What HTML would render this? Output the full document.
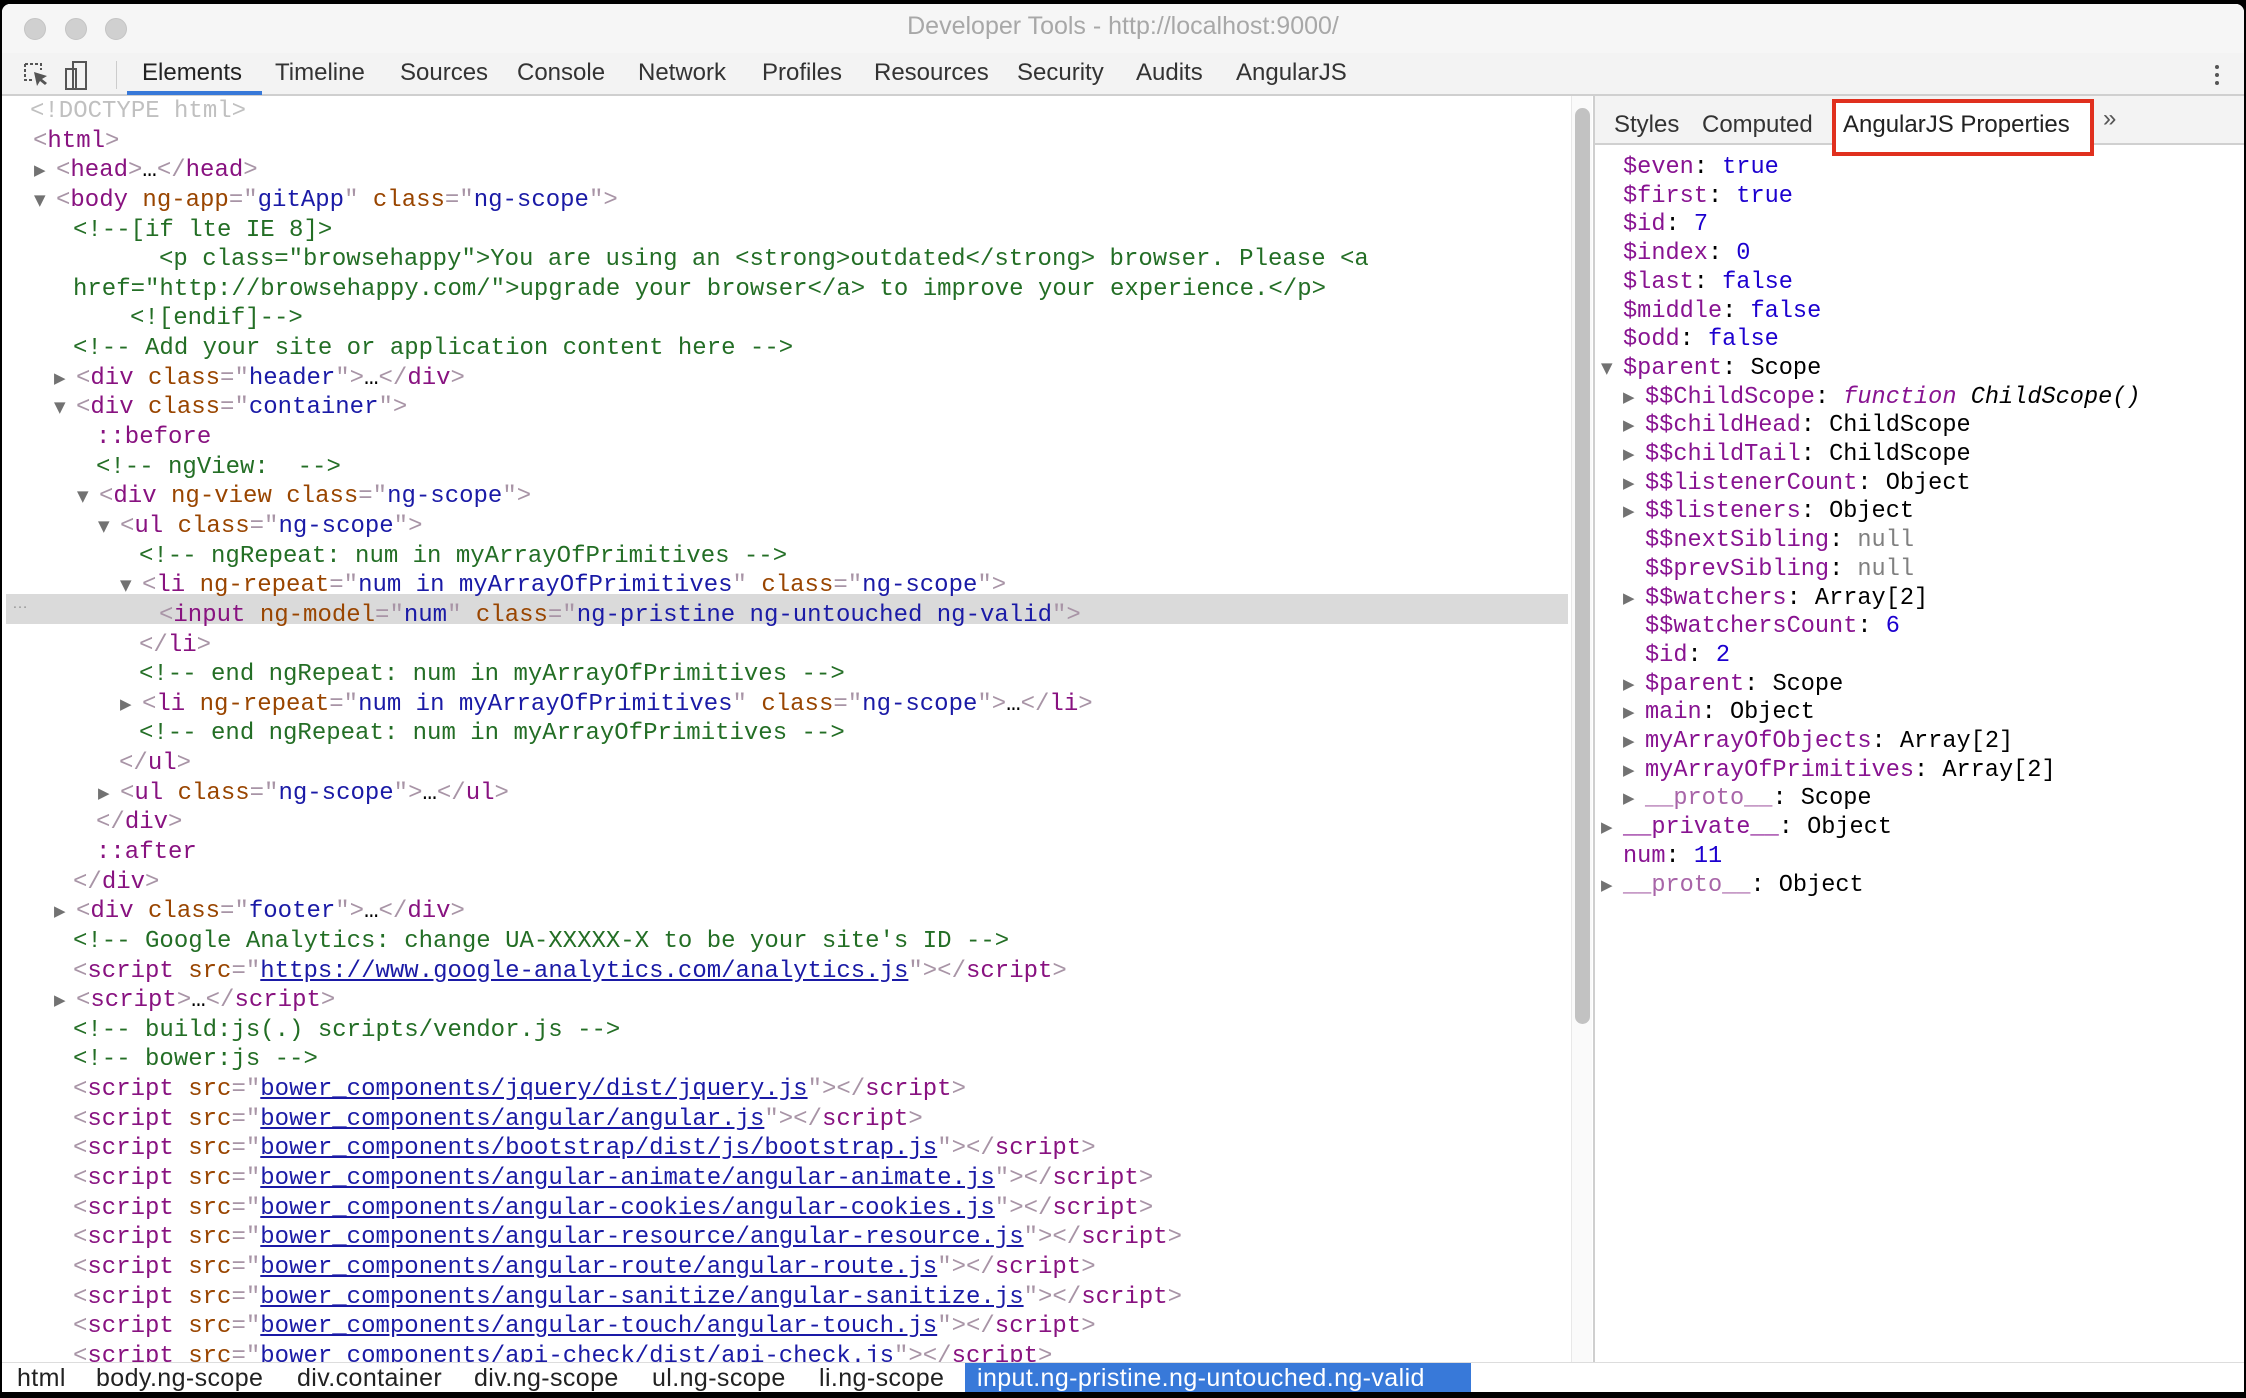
<!DOCTYPE html>
<html><head><meta charset="utf-8">
<style>
*{margin:0;padding:0;box-sizing:border-box}
body{width:2246px;height:1398px;background:#000;overflow:hidden;position:relative;font-family:"Liberation Sans",sans-serif}
#win{position:absolute;left:2px;top:4px;width:2242px;height:1388px;background:#fff;border-radius:8px 8px 0 0;overflow:hidden}
#title{position:absolute;left:0;top:0;width:100%;height:49px;background:#f6f6f6}
.tl{position:absolute;top:14px;width:22px;height:22px;border-radius:50%;background:#d0d0d0;border:1px solid #c4c4c4}
#ttext{position:absolute;top:8px;left:0;width:100%;text-align:center;font-size:25px;color:#a8a8a8}
#tabs{position:absolute;left:0;top:49px;width:100%;height:43px;background:#f3f3f3;border-bottom:2px solid #cfcfcf}
.tab{position:absolute;top:6px;font-size:24px;color:#333}
#code,#props{position:absolute;font-family:"Liberation Mono",monospace;font-size:24px;white-space:pre}
.l{position:absolute;height:29.64px;line-height:29.64px}
.l .tri{position:absolute;left:-22px;top:0;line-height:29.64px}
.t{color:#881280}.b{color:#a894a6}.a{color:#994500}.v{color:#1a1aa6}.c{color:#236e25}.g{color:#c0c0c0}
.u{color:#1a1aa6;text-decoration:underline}
.tri{font-size:15px;color:#727272;font-family:"DejaVu Sans",sans-serif}
.k{color:#881391}.n{color:#1c00cf}.nl{color:#808080}.pk{color:#a865a8}
#crumbs{position:absolute;left:0;top:1358px;width:100%;height:32px;background:#fff;border-top:1px solid #ddd;font-size:25px;color:#222;letter-spacing:0.4px}
.cr{position:absolute;top:1px}
</style></head><body>
<div id="win">
<div id="title">
<div class="tl" style="left:22px"></div><div class="tl" style="left:63px"></div><div class="tl" style="left:103px"></div>
<div id="ttext">Developer Tools - http://localhost:9000/</div>
</div>
<div id="tabs">
<svg style="position:absolute;left:20px;top:8px" width="28" height="28" viewBox="0 0 28 28"><path d="M3 3h16v6M3 3v16h7" fill="none" stroke="#555" stroke-width="2" stroke-dasharray="3 2"/><path d="M12 11l3 14 3-5 5 4 2-2-5-4 5-3z" fill="#555"/></svg>
<svg style="position:absolute;left:62px;top:6px" width="26" height="34" viewBox="0 0 26 34"><rect x="2" y="10" width="10" height="20" fill="none" stroke="#555" stroke-width="2"/><rect x="9" y="3" width="13" height="27" fill="none" stroke="#555" stroke-width="2"/></svg>
<div style="position:absolute;left:114px;top:8px;width:1px;height:28px;background:#ccc"></div>
<div class="tab" style="left:140px;color:#222">Elements</div>
<div style="position:absolute;left:125px;top:38px;width:135px;height:4px;background:#3879d9"></div>
<div class="tab" style="left:273px">Timeline</div>
<div class="tab" style="left:398px">Sources</div>
<div class="tab" style="left:515px">Console</div>
<div class="tab" style="left:636px">Network</div>
<div class="tab" style="left:760px">Profiles</div>
<div class="tab" style="left:872px">Resources</div>
<div class="tab" style="left:1015px">Security</div>
<div class="tab" style="left:1134px">Audits</div>
<div class="tab" style="left:1234px">AngularJS</div>
<div style="position:absolute;left:2213px;top:12px;width:4px;height:4px;background:#555;border-radius:50%;box-shadow:0 8px 0 #555,0 16px 0 #555"></div>
</div>

<div style="position:absolute;left:4px;top:590px;width:1562px;height:30px;background:#dadada"></div>
<div style="position:absolute;left:10px;top:591px;font-size:16px;color:#999">…</div>

<div id="code" style="left:-2px;top:93px">
<div class="l" style="top:0;left:30px"><span class="g">&lt;!DOCTYPE html&gt;</span></div>
<div class="l" style="top:29.64px;left:33px"><span class="b">&lt;</span><span class="t">html</span><span class="b">&gt;</span></div>
<div class="l" style="top:59.28px;left:56px"><span class="tri">▶</span><span class="b">&lt;</span><span class="t">head</span><span class="b">&gt;</span>…<span class="b">&lt;/</span><span class="t">head</span><span class="b">&gt;</span></div>
<div class="l" style="top:88.92px;left:56px"><span class="tri">▼</span><span class="b">&lt;</span><span class="t">body</span> <span class="a">ng-app</span><span class="b">="</span><span class="v">gitApp</span><span class="b">"</span> <span class="a">class</span><span class="b">="</span><span class="v">ng-scope</span><span class="b">"&gt;</span></div>
<div class="l c" style="top:118.56px;left:73px">&lt;!--[if lte IE 8]&gt;</div>
<div class="l c" style="top:148.2px;left:159px">&lt;p class="browsehappy"&gt;You are using an &lt;strong&gt;outdated&lt;/strong&gt; browser. Please &lt;a</div>
<div class="l c" style="top:177.84px;left:73px">href="http://browsehappy.com/"&gt;upgrade your browser&lt;/a&gt; to improve your experience.&lt;/p&gt;</div>
<div class="l c" style="top:207.48px;left:130px">&lt;![endif]--&gt;</div>
<div class="l c" style="top:237.12px;left:73px">&lt;!-- Add your site or application content here --&gt;</div>
<div class="l" style="top:266.76px;left:76px"><span class="tri">▶</span><span class="b">&lt;</span><span class="t">div</span> <span class="a">class</span><span class="b">="</span><span class="v">header</span><span class="b">"&gt;</span>…<span class="b">&lt;/</span><span class="t">div</span><span class="b">&gt;</span></div>
<div class="l" style="top:296.4px;left:76px"><span class="tri">▼</span><span class="b">&lt;</span><span class="t">div</span> <span class="a">class</span><span class="b">="</span><span class="v">container</span><span class="b">"&gt;</span></div>
<div class="l t" style="top:326.04px;left:96px">::before</div>
<div class="l c" style="top:355.68px;left:96px">&lt;!-- ngView:  --&gt;</div>
<div class="l" style="top:385.32px;left:99px"><span class="tri">▼</span><span class="b">&lt;</span><span class="t">div</span> <span class="a">ng-view</span> <span class="a">class</span><span class="b">="</span><span class="v">ng-scope</span><span class="b">"&gt;</span></div>
<div class="l" style="top:414.96px;left:120px"><span class="tri">▼</span><span class="b">&lt;</span><span class="t">ul</span> <span class="a">class</span><span class="b">="</span><span class="v">ng-scope</span><span class="b">"&gt;</span></div>
<div class="l c" style="top:444.6px;left:139px">&lt;!-- ngRepeat: num in myArrayOfPrimitives --&gt;</div>
<div class="l" style="top:474.24px;left:142px"><span class="tri">▼</span><span class="b">&lt;</span><span class="t">li</span> <span class="a">ng-repeat</span><span class="b">="</span><span class="v">num in myArrayOfPrimitives</span><span class="b">"</span> <span class="a">class</span><span class="b">="</span><span class="v">ng-scope</span><span class="b">"&gt;</span></div>
<div class="l" style="top:503.88px;left:159px"><span class="b">&lt;</span><span class="t">input</span> <span class="a">ng-model</span><span class="b">="</span><span class="v">num</span><span class="b">"</span> <span class="a">class</span><span class="b">="</span><span class="v">ng-pristine ng-untouched ng-valid</span><span class="b">"&gt;</span></div>
<div class="l" style="top:533.52px;left:139px"><span class="b">&lt;/</span><span class="t">li</span><span class="b">&gt;</span></div>
<div class="l c" style="top:563.16px;left:139px">&lt;!-- end ngRepeat: num in myArrayOfPrimitives --&gt;</div>
<div class="l" style="top:592.8px;left:142px"><span class="tri">▶</span><span class="b">&lt;</span><span class="t">li</span> <span class="a">ng-repeat</span><span class="b">="</span><span class="v">num in myArrayOfPrimitives</span><span class="b">"</span> <span class="a">class</span><span class="b">="</span><span class="v">ng-scope</span><span class="b">"&gt;</span>…<span class="b">&lt;/</span><span class="t">li</span><span class="b">&gt;</span></div>
<div class="l c" style="top:622.44px;left:139px">&lt;!-- end ngRepeat: num in myArrayOfPrimitives --&gt;</div>
<div class="l" style="top:652.08px;left:119px"><span class="b">&lt;/</span><span class="t">ul</span><span class="b">&gt;</span></div>
<div class="l" style="top:681.72px;left:120px"><span class="tri">▶</span><span class="b">&lt;</span><span class="t">ul</span> <span class="a">class</span><span class="b">="</span><span class="v">ng-scope</span><span class="b">"&gt;</span>…<span class="b">&lt;/</span><span class="t">ul</span><span class="b">&gt;</span></div>
<div class="l" style="top:711.36px;left:96px"><span class="b">&lt;/</span><span class="t">div</span><span class="b">&gt;</span></div>
<div class="l t" style="top:741px;left:96px">::after</div>
<div class="l" style="top:770.64px;left:73px"><span class="b">&lt;/</span><span class="t">div</span><span class="b">&gt;</span></div>
<div class="l" style="top:800.28px;left:76px"><span class="tri">▶</span><span class="b">&lt;</span><span class="t">div</span> <span class="a">class</span><span class="b">="</span><span class="v">footer</span><span class="b">"&gt;</span>…<span class="b">&lt;/</span><span class="t">div</span><span class="b">&gt;</span></div>
<div class="l c" style="top:829.92px;left:73px">&lt;!-- Google Analytics: change UA-XXXXX-X to be your site's ID --&gt;</div>
<div class="l" style="top:859.56px;left:73px"><span class="b">&lt;</span><span class="t">script</span> <span class="a">src</span><span class="b">="</span><span class="u">https://www.google-analytics.com/analytics.js</span><span class="b">"&gt;&lt;/</span><span class="t">script</span><span class="b">&gt;</span></div>
<div class="l" style="top:889.2px;left:76px"><span class="tri">▶</span><span class="b">&lt;</span><span class="t">script</span><span class="b">&gt;</span>…<span class="b">&lt;/</span><span class="t">script</span><span class="b">&gt;</span></div>
<div class="l c" style="top:918.84px;left:73px">&lt;!-- build:js(.) scripts/vendor.js --&gt;</div>
<div class="l c" style="top:948.48px;left:73px">&lt;!-- bower:js --&gt;</div>
<div class="l" style="top:978.12px;left:73px"><span class="b">&lt;</span><span class="t">script</span> <span class="a">src</span><span class="b">="</span><span class="u">bower_components/jquery/dist/jquery.js</span><span class="b">"&gt;&lt;/</span><span class="t">script</span><span class="b">&gt;</span></div>
<div class="l" style="top:1007.76px;left:73px"><span class="b">&lt;</span><span class="t">script</span> <span class="a">src</span><span class="b">="</span><span class="u">bower_components/angular/angular.js</span><span class="b">"&gt;&lt;/</span><span class="t">script</span><span class="b">&gt;</span></div>
<div class="l" style="top:1037.4px;left:73px"><span class="b">&lt;</span><span class="t">script</span> <span class="a">src</span><span class="b">="</span><span class="u">bower_components/bootstrap/dist/js/bootstrap.js</span><span class="b">"&gt;&lt;/</span><span class="t">script</span><span class="b">&gt;</span></div>
<div class="l" style="top:1067.04px;left:73px"><span class="b">&lt;</span><span class="t">script</span> <span class="a">src</span><span class="b">="</span><span class="u">bower_components/angular-animate/angular-animate.js</span><span class="b">"&gt;&lt;/</span><span class="t">script</span><span class="b">&gt;</span></div>
<div class="l" style="top:1096.68px;left:73px"><span class="b">&lt;</span><span class="t">script</span> <span class="a">src</span><span class="b">="</span><span class="u">bower_components/angular-cookies/angular-cookies.js</span><span class="b">"&gt;&lt;/</span><span class="t">script</span><span class="b">&gt;</span></div>
<div class="l" style="top:1126.32px;left:73px"><span class="b">&lt;</span><span class="t">script</span> <span class="a">src</span><span class="b">="</span><span class="u">bower_components/angular-resource/angular-resource.js</span><span class="b">"&gt;&lt;/</span><span class="t">script</span><span class="b">&gt;</span></div>
<div class="l" style="top:1155.96px;left:73px"><span class="b">&lt;</span><span class="t">script</span> <span class="a">src</span><span class="b">="</span><span class="u">bower_components/angular-route/angular-route.js</span><span class="b">"&gt;&lt;/</span><span class="t">script</span><span class="b">&gt;</span></div>
<div class="l" style="top:1185.6px;left:73px"><span class="b">&lt;</span><span class="t">script</span> <span class="a">src</span><span class="b">="</span><span class="u">bower_components/angular-sanitize/angular-sanitize.js</span><span class="b">"&gt;&lt;/</span><span class="t">script</span><span class="b">&gt;</span></div>
<div class="l" style="top:1215.24px;left:73px"><span class="b">&lt;</span><span class="t">script</span> <span class="a">src</span><span class="b">="</span><span class="u">bower_components/angular-touch/angular-touch.js</span><span class="b">"&gt;&lt;/</span><span class="t">script</span><span class="b">&gt;</span></div>
<div class="l" style="top:1244.88px;left:73px"><span class="b">&lt;</span><span class="t">script</span> <span class="a">src</span><span class="b">="</span><span class="u">bower_components/api-check/dist/api-check.js</span><span class="b">"&gt;&lt;/</span><span class="t">script</span><span class="b">&gt;</span></div>
</div>

<div style="position:absolute;left:1569px;top:92px;width:21px;height:1266px;background:#fafafa;border-left:1px solid #e8e8e8"></div>
<div style="position:absolute;left:1573px;top:104px;width:15px;height:916px;background:#c2c2c2;border-radius:8px"></div>
<div style="position:absolute;left:1591px;top:92px;width:2px;height:1266px;background:#cfcfcf"></div>

<div style="position:absolute;left:1593px;top:92px;width:649px;height:49px;background:#f3f3f3;border-bottom:2px solid #d0d0d0"></div>
<div class="tab" style="left:1612px;top:107px;color:#333">Styles</div>
<div class="tab" style="left:1700px;top:107px;color:#333">Computed</div>
<div style="position:absolute;left:1830px;top:95px;width:262px;height:57px;border:4px solid #e0301e;background:#fff"></div>
<div class="tab" style="left:1841px;top:107px;color:#222">AngularJS Properties</div>
<div class="tab" style="left:2101px;top:101px;color:#555">»</div>

<div id="props" style="left:0;top:0;font-size:23.6px">
<div class="l" style="top:149px;left:1621px"><span class="k">$even</span>: <span class="n">true</span></div>
<div class="l" style="top:177.7px;left:1621px"><span class="k">$first</span>: <span class="n">true</span></div>
<div class="l" style="top:206.4px;left:1621px"><span class="k">$id</span>: <span class="n">7</span></div>
<div class="l" style="top:235.1px;left:1621px"><span class="k">$index</span>: <span class="n">0</span></div>
<div class="l" style="top:263.8px;left:1621px"><span class="k">$last</span>: <span class="n">false</span></div>
<div class="l" style="top:292.5px;left:1621px"><span class="k">$middle</span>: <span class="n">false</span></div>
<div class="l" style="top:321.2px;left:1621px"><span class="k">$odd</span>: <span class="n">false</span></div>
<div class="l" style="top:349.9px;left:1621px"><span class="tri">▼</span><span class="k">$parent</span>: Scope</div>
<div class="l" style="top:378.6px;left:1643px"><span class="tri">▶</span><span class="k">$$ChildScope</span>: <i class="k">function</i> <i>ChildScope()</i></div>
<div class="l" style="top:407.3px;left:1643px"><span class="tri">▶</span><span class="k">$$childHead</span>: ChildScope</div>
<div class="l" style="top:436px;left:1643px"><span class="tri">▶</span><span class="k">$$childTail</span>: ChildScope</div>
<div class="l" style="top:464.7px;left:1643px"><span class="tri">▶</span><span class="k">$$listenerCount</span>: Object</div>
<div class="l" style="top:493.4px;left:1643px"><span class="tri">▶</span><span class="k">$$listeners</span>: Object</div>
<div class="l" style="top:522.1px;left:1643px"><span class="k">$$nextSibling</span>: <span class="nl">null</span></div>
<div class="l" style="top:550.8px;left:1643px"><span class="k">$$prevSibling</span>: <span class="nl">null</span></div>
<div class="l" style="top:579.5px;left:1643px"><span class="tri">▶</span><span class="k">$$watchers</span>: Array[2]</div>
<div class="l" style="top:608.2px;left:1643px"><span class="k">$$watchersCount</span>: <span class="n">6</span></div>
<div class="l" style="top:636.9px;left:1643px"><span class="k">$id</span>: <span class="n">2</span></div>
<div class="l" style="top:665.6px;left:1643px"><span class="tri">▶</span><span class="k">$parent</span>: Scope</div>
<div class="l" style="top:694.3px;left:1643px"><span class="tri">▶</span><span class="k">main</span>: Object</div>
<div class="l" style="top:723px;left:1643px"><span class="tri">▶</span><span class="k">myArrayOfObjects</span>: Array[2]</div>
<div class="l" style="top:751.7px;left:1643px"><span class="tri">▶</span><span class="k">myArrayOfPrimitives</span>: Array[2]</div>
<div class="l" style="top:780.4px;left:1643px"><span class="tri">▶</span><span class="pk">__proto__</span>: Scope</div>
<div class="l" style="top:809.1px;left:1621px"><span class="tri">▶</span><span class="k">__private__</span>: Object</div>
<div class="l" style="top:837.8px;left:1621px"><span class="k">num</span>: <span class="n">11</span></div>
<div class="l" style="top:866.5px;left:1621px"><span class="tri">▶</span><span class="pk">__proto__</span>: Object</div>
</div>

<div id="crumbs">
<span class="cr" style="left:15px">html</span>
<span class="cr" style="left:94px">body.ng-scope</span>
<span class="cr" style="left:295px">div.container</span>
<span class="cr" style="left:472px">div.ng-scope</span>
<span class="cr" style="left:650px">ul.ng-scope</span>
<span class="cr" style="left:817px">li.ng-scope</span>
<div style="position:absolute;left:963px;top:0;width:506px;height:31px;background:#3879d9"></div>
<span class="cr" style="left:975px;color:#fff">input.ng-pristine.ng-untouched.ng-valid</span>
</div>
</div>
</body></html>
